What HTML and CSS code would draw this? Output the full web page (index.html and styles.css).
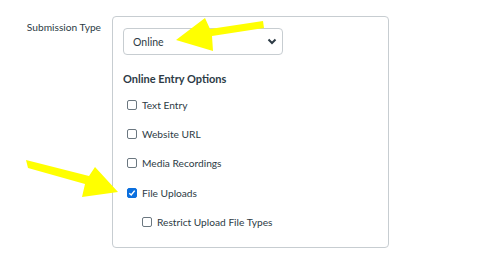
FILE: index.html
```html
<!DOCTYPE html>
<html lang="en">
<head>
  <meta charset="UTF-8">
  <meta name="viewport" content="width=device-width, initial-scale=1.0">
  <title>Submission Type</title>
  <link rel="stylesheet" href="styles.css">
</head>
<body>
  <div class="form-row">
    <div class="form-label">Submission Type</div>

    <div class="form-box">
      <div class="select">
        <span class="select-value">Online</span>
        <svg class="select-arrow" width="10" height="7" viewBox="0 0 10 7">
          <path d="M1.5 1.5 L5 5 L8.5 1.5" fill="none" stroke="#2d3b45" stroke-width="2"/>
        </svg>
      </div>

      <div class="options-title">Online Entry Options</div>

      <div class="options">
        <label class="option"><span class="check"></span>Text Entry</label>
        <label class="option"><span class="check"></span>Website URL</label>
        <label class="option"><span class="check"></span>Media Recordings</label>
        <label class="option"><span class="check checked">
          <svg width="8" height="8" viewBox="0 0 8 8"><path d="M1.3 4.2 L3.2 6 L6.7 1.6" fill="none" stroke="#fff" stroke-width="1.5"/></svg>
        </span>File Uploads</label>
        <label class="option option-sub"><span class="check"></span>Restrict Upload File Types</label>
      </div>
    </div>
  </div>

  <!-- yellow callout arrows drawn over the form -->
  <svg class="arrows" width="500" height="260" viewBox="0 0 500 260">
    <polygon fill="#ffff00" points="176,40 205,18 210,29 263,21 264,28 212,36 213,51"/>
    <polygon fill="#ffff00" points="26,160 89,176 95,167 118,192 82,197 85,184 28,168"/>
  </svg>
</body>
</html>
```

FILE: styles.css
```css
html, body {
  margin: 0;
  padding: 0;
  background-color: #fff;
  color: #2d3b45;
  font-family: Lato, "Liberation Sans", sans-serif;
  font-size: 10.2px;
}
*, *:before, *:after { box-sizing: border-box; }
body { position: relative; width: 500px; height: 260px; overflow: hidden; }

.form-row {
  display: flex;
  padding-top: 16px;
}
.form-label {
  width: 101px;
  text-align: right;
  padding-top: 4px;
  line-height: 14px;
}

.form-box {
  margin-left: 11px;
  width: 277px;
  height: 232px;
  border: 1px solid #c7cdd1;
  border-radius: 4px;
  padding: 11px 0 0 10px;
}

.select {
  width: 160px;
  height: 27px;
  border: 1px solid #c7cdd1;
  border-radius: 4px;
  display: flex;
  align-items: center;
  justify-content: space-between;
  padding: 0 5px 0 9px;
}
.select-value { line-height: 14px; font-size: 10.5px; }
.select-arrow { display: block; }

.options-title {
  margin-top: 17px;
  font-weight: bold;
  font-size: 11px;
  line-height: 14px;
}

.options {
  margin-top: 4px;
  display: flex;
  flex-direction: column;
}
.option {
  height: 29.3px;
  display: flex;
  align-items: center;
  gap: 5px;
  padding-left: 4px;
}
.option-sub { padding-left: 19px; }

.check {
  width: 10px;
  height: 10px;
  border: 1.5px solid #6b7780;
  border-radius: 2px;
  display: flex;
  align-items: center;
  justify-content: center;
}
.check.checked {
  background-color: #0b6fde;
  border-color: #0b6fde;
}
.check svg { display: block; }

.arrows {
  position: absolute;
  left: 0;
  top: 0;
  pointer-events: none;
}
```
